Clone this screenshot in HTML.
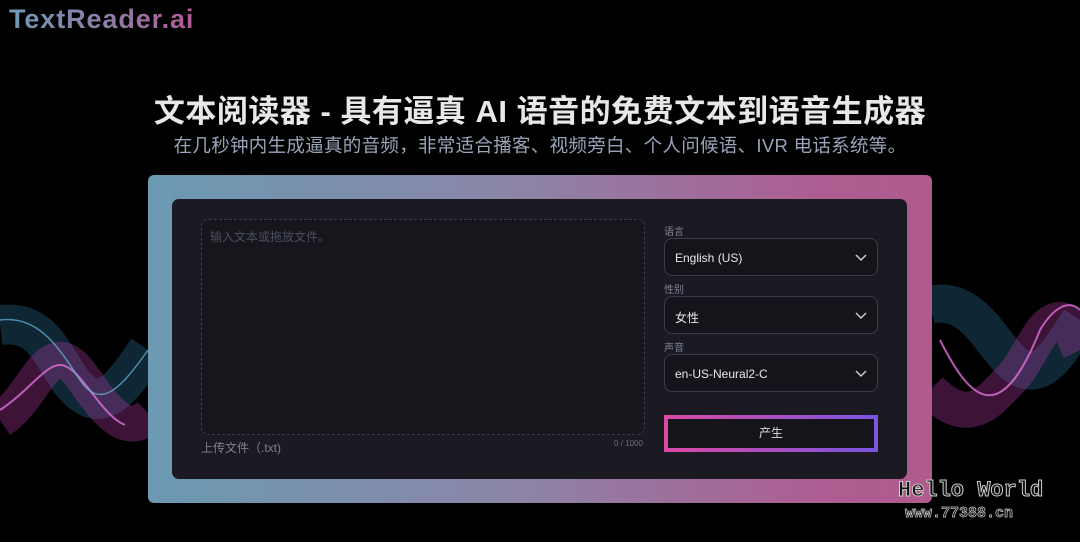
<!DOCTYPE html>
<html><head><meta charset="utf-8"><style>
*{margin:0;padding:0;box-sizing:border-box}
body{width:1080px;height:542px;background:#000;overflow:hidden;position:relative;font-family:"Liberation Sans","Noto Sans CJK SC",sans-serif;color:#fff}
.logo{position:absolute;left:9px;top:4px;font-size:27px;font-weight:bold;background:linear-gradient(90deg,#6f9ab5,#8a7fa9 50%,#b05a95);-webkit-background-clip:text;color:transparent;letter-spacing:0.9px}
h1{position:absolute;top:86px;left:0;width:1080px;text-align:center;font-size:31px;font-weight:bold;color:#e8e8ea;letter-spacing:0.5px}
.sub{position:absolute;top:132px;left:0;width:1080px;text-align:center;font-size:18.5px;color:#9aa3b8;letter-spacing:0.3px}
.outer{position:absolute;left:148px;top:175px;width:784px;height:328px;border-radius:6px;background:linear-gradient(90deg,#6b9ab2,#8a86a8 45%,#ad5e92 85%,#b05a8e)}
.inner{position:absolute;left:24px;top:24px;width:735px;height:280px;border-radius:7px;background:#1b1a22}
.ta{position:absolute;left:29px;top:20px;width:444px;height:216px;border:1px dashed #3d3d4a;border-radius:8px;background:#17161d}
.ph{position:absolute;left:8px;top:8px;font-size:12px;color:#4b4f5f}
.up{position:absolute;left:29px;top:240px;font-size:12px;color:#7c8296}
.cnt{position:absolute;left:442px;top:240px;font-size:8px;color:#6c7080}
.lab{position:absolute;left:492px;font-size:10px;color:#7c8296}
.sel{position:absolute;left:492px;width:214px;height:38px;border:1px solid #3c3c48;border-radius:8px;background:#15141b;font-size:12px;color:#e8e8ea;padding:12px 10px}
.sel svg{position:absolute;right:10px;top:15px}
.btn{position:absolute;left:492px;top:216px;width:214px;height:37px;border:4px solid;border-image:linear-gradient(90deg,#d94aa3,#7a55e0) 1;background:#15141b;text-align:center;font-size:12px;line-height:29px;color:#ddd}
.wm{position:absolute;left:898px;top:478px;font-size:22px;font-weight:bold;color:#111;-webkit-text-stroke:1px #ccc;font-family:"Liberation Mono",monospace}
.wm2{position:absolute;left:905px;top:505px;font-size:15px;font-weight:bold;color:#111;-webkit-text-stroke:0.7px #ccc;font-family:"Liberation Mono",monospace}
</style></head><body>
<svg style="position:absolute;left:0;top:280px" width="150" height="170">
<path d="M0,45 C40,40 50,70 70,100 C100,140 120,110 148,70" stroke="#2c6f95" stroke-width="40" fill="none" opacity="0.35"/>
<path d="M0,140 C30,120 40,80 60,80 C80,80 90,120 120,140 C135,148 145,140 150,135" stroke="#b03aa0" stroke-width="36" fill="none" opacity="0.35"/>
<path d="M0,130 C30,110 45,85 60,85 C80,85 100,135 125,145" stroke="#e070d8" stroke-width="2" fill="none" opacity="0.8"/>
<path d="M0,40 C40,35 60,70 80,100 C100,130 120,110 148,70" stroke="#6ab8e0" stroke-width="1.5" fill="none" opacity="0.7"/>
</svg>
<svg style="position:absolute;left:930px;top:280px" width="150" height="150">
<path d="M0,25 C40,15 60,60 80,80 C110,110 130,70 150,40" stroke="#2c6f95" stroke-width="38" fill="none" opacity="0.35"/>
<path d="M0,110 C40,150 60,120 80,100 C100,80 110,40 130,40 C140,40 145,60 150,70" stroke="#b03aa0" stroke-width="36" fill="none" opacity="0.35"/>
<path d="M10,60 C40,120 70,150 110,50 C125,25 140,20 150,30" stroke="#e070d8" stroke-width="2" fill="none" opacity="0.8"/>
</svg>
<div class="logo">TextReader.ai</div>
<h1>文本阅读器 - 具有逼真 AI 语音的免费文本到语音生成器</h1>
<div class="sub">在几秒钟内生成逼真的音频，非常适合播客、视频旁白、个人问候语、IVR 电话系统等。</div>
<div class="outer"><div class="inner">
<div class="ta"><div class="ph">输入文本或拖放文件。</div></div>
<div class="up">上传文件（.txt)</div>
<div class="cnt">0 / 1000</div>
<div class="lab" style="top:24px">语言</div>
<div class="sel" style="top:39px">English (US)<svg width="12" height="8"><path d="M1,1 L6,6 L11,1" stroke="#ccc" stroke-width="1.5" fill="none"/></svg></div>
<div class="lab" style="top:82px">性别</div>
<div class="sel" style="top:97px">女性<svg width="12" height="8"><path d="M1,1 L6,6 L11,1" stroke="#ccc" stroke-width="1.5" fill="none"/></svg></div>
<div class="lab" style="top:140px">声音</div>
<div class="sel" style="top:155px">en-US-Neural2-C<svg width="12" height="8"><path d="M1,1 L6,6 L11,1" stroke="#ccc" stroke-width="1.5" fill="none"/></svg></div>
<div class="btn">产生</div>
</div></div>
<div class="wm">Hello World</div>
<div class="wm2">www.77388.cn</div>
</body></html>
